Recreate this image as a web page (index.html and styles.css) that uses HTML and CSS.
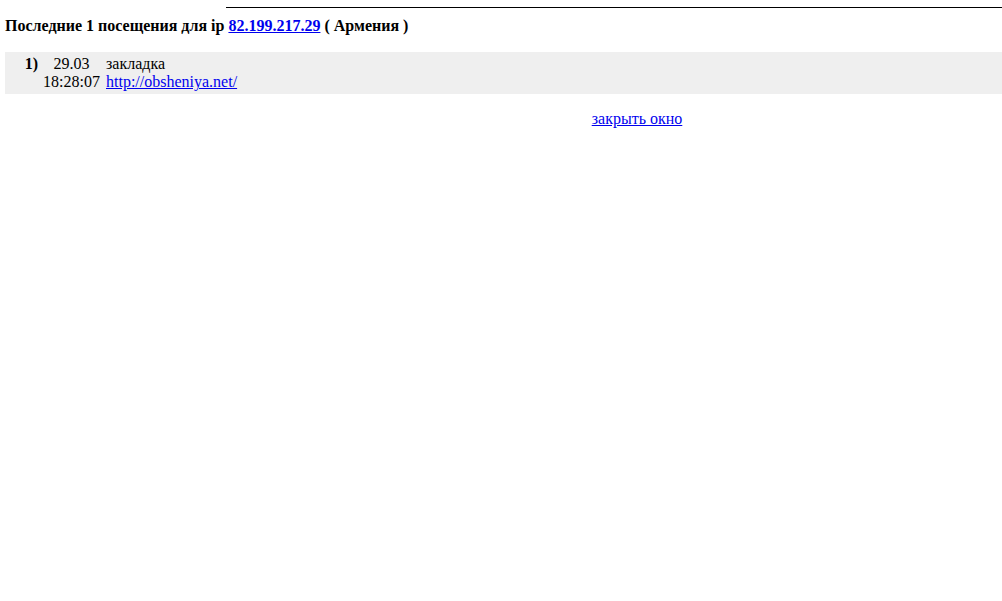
FILE: index.html
```html
<!DOCTYPE html>
<html>
<head>
<meta charset="utf-8">
<link rel="stylesheet" href="styles.css">
</head>
<body>
<div class="topline"></div>
<h1 class="title">Последние 1 посещения для ip <a href="#">82.199.217.29</a> ( Армения )</h1>
<div class="visits">
  <div class="num">1)</div>
  <div class="date">29.03</div>
  <div class="type">закладка</div>
  <div class="time">18:28:07</div>
  <div class="url"><a href="#">http://obsheniya.net/</a></div>
</div>
<div class="close"><a href="#">закрыть окно</a></div>
</body>
</html>
```

FILE: styles.css
```css
html, body {
  margin: 0;
  padding: 0;
  background: #fff;
}
body {
  font-family: "Liberation Serif", "Times New Roman", serif;
  font-size: 16px;
  color: #000;
  padding: 7px 0 0 5px;
}
a { color: #0000ee; }
.topline {
  margin-left: 221px;
  height: 1px;
  background: #000;
}
.title {
  font-size: 16px;
  font-weight: bold;
  margin: 8px 0 0 0;
  line-height: 19px;
}
.visits {
  margin-top: 17px;
  background: #efefef;
  display: grid;
  grid-template-columns: 36px 61px auto;
  grid-template-rows: 18px 18px;
  padding: 3px 0 3px 0;
  line-height: 18px;
}
.num {
  font-weight: bold;
  text-align: right;
  padding-right: 3px;
}
.date {
  text-align: center;
}
.type { padding-left: 4px; }
.time {
  grid-column: 2;
  text-align: center;
}
.url { padding-left: 4px; }
.close {
  margin-left: 267px;
  text-align: center;
  margin-top: 16px;
  line-height: 18px;
}
```
